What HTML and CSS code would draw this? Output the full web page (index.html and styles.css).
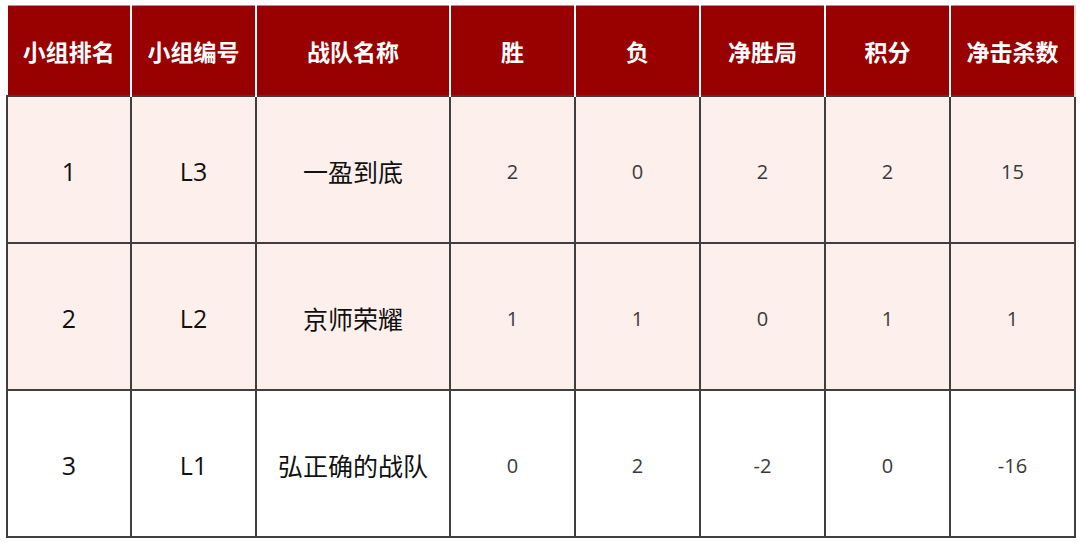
FILE: index.html
```html
<!DOCTYPE html>
<html lang="zh">
<head>
<meta charset="utf-8">
<link rel="stylesheet" href="styles.css">
</head>
<body>
<table class="standings">
  <colgroup>
    <col class="c-rank"><col class="c-code"><col class="c-team"><col class="c-n"><col class="c-n"><col class="c-n"><col class="c-n"><col class="c-n">
  </colgroup>
  <thead>
    <tr>
      <th>小组排名</th><th>小组编号</th><th>战队名称</th><th>胜</th><th>负</th><th>净胜局</th><th>积分</th><th>净击杀数</th>
    </tr>
  </thead>
  <tbody>
    <tr class="pink">
      <td class="big">1</td><td class="big">L3</td><td class="big">一盈到底</td><td>2</td><td>0</td><td>2</td><td>2</td><td>15</td>
    </tr>
    <tr class="pink">
      <td class="big">2</td><td class="big">L2</td><td class="big">京师荣耀</td><td>1</td><td>1</td><td>0</td><td>1</td><td>1</td>
    </tr>
    <tr>
      <td class="big">3</td><td class="big">L1</td><td class="big">弘正确的战队</td><td>0</td><td>2</td><td>-2</td><td>0</td><td>-16</td>
    </tr>
  </tbody>
</table>
</body>
</html>
```
FILE: styles.css
```css
html, body {
  margin: 0;
  padding: 0;
  background: #ffffff;
}
body {
  padding: 5px 0 0 6px;
  font-family: "Noto Sans CJK SC", "Noto Sans", sans-serif;
}
.standings {
  border-collapse: collapse;
  table-layout: fixed;
  width: 1068px;
  border-top: 1px solid #9a9a9a;
}
.c-rank { width: 124px; }
.c-code { width: 125px; }
.c-team { width: 194px; }
.c-n { width: 125px; }
.standings th {
  height: 89px;
  padding: 0;
  background: #990000;
  color: #ffffff;
  font-size: 23px;
  font-weight: 700;
  text-align: center;
  vertical-align: middle;
  border-left: 2px solid #ffffff;
  border-right: 2px solid #ffffff;
  border-bottom: 1px solid #ffffff;
}
.standings th:first-child { border-left: 1px solid #ffffff; }
.standings th:last-child { border-right: 2px solid #f6d6d2; }
.standings td {
  height: 142px;
  padding: 3px 0 0;
  text-align: center;
  vertical-align: middle;
  border: 2px solid #3f3f3f;
  color: #3a3a3a;
  font-family: "Open Sans", "Noto Sans CJK SC", sans-serif;
  font-size: 20px;
  font-weight: 400;
}
.standings td.big {
  color: #111111;
  font-size: 25px;
}
.standings tr.pink td {
  background: #fdefec;
}
```
